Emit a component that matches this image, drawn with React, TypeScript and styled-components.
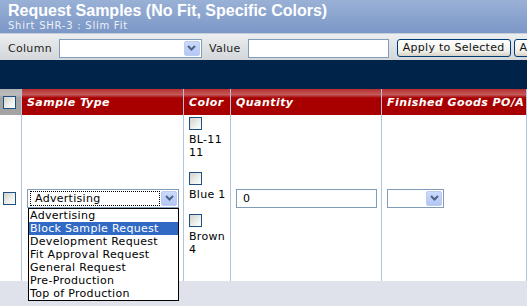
import React from 'react';
import styled, { createGlobalStyle } from 'styled-components';

const GlobalStyle = createGlobalStyle`
  html, body {
    margin: 0;
    padding: 0;
    background: #dfe2ea;
  }
  body {
    font-family: "DejaVu Sans", Verdana, sans-serif;
    font-size: 11px;
    letter-spacing: 0.3px;
    color: #000;
    overflow: hidden;
  }
`;

const Page = styled.div`
  width: 527px;
  height: 306px;
  overflow: hidden;
  display: flex;
  flex-direction: column;
  background: #dfe2ea;
`;

const TitleBar = styled.div`
  height: 34px;
  box-sizing: border-box;
  padding: 1px 8px 0;
  background: linear-gradient(#9ab1d6, #7b97c7);
  border-bottom: 1px solid #c6ced8;
  color: #fff;
`;

const Title = styled.div`
  font-family: "Liberation Sans", Arial, sans-serif;
  font-weight: bold;
  font-size: 16px;
  line-height: 19px;
  letter-spacing: 0;
  white-space: nowrap;
`;

const Subtitle = styled.div`
  font-size: 10px;
  line-height: 12px;
  color: #eef2f8;
  letter-spacing: 0.75px;
  white-space: nowrap;
`;

const Toolbar = styled.div`
  height: 26px;
  box-sizing: border-box;
  display: flex;
  align-items: center;
  padding: 2px 0 0 8px;
  background: linear-gradient(#eceeef, #d3d7da);
  white-space: nowrap;
  overflow: hidden;
`;

const Label = styled.span`
  color: #222;
  margin-right: 7px;
`;

const Input = styled.div<{ w: number }>`
  width: ${p => p.w}px;
  height: 19px;
  box-sizing: border-box;
  border: 1px solid #7f9db9;
  background: #fff;
  padding: 0 6px;
  line-height: 17px;
  flex-shrink: 0;
`;

const ToolInput = styled(Input)`
  margin-right: 8px;
`;

const SelectBox = styled.div<{ w: number }>`
  position: relative;
  width: ${p => p.w}px;
  height: 19px;
  box-sizing: border-box;
  border: 1px solid #7f9db9;
  background: #fff;
  display: flex;
  align-items: center;
  padding: 0 1px 0 2px;
  flex-shrink: 0;
`;

const ToolSelect = styled(SelectBox)`
  margin-right: 7px;
`;

const SelectValue = styled.div<{ focused?: boolean }>`
  flex: 1;
  height: 15px;
  box-sizing: border-box;
  line-height: 13px;
  padding-left: 4px;
  border: 1px ${p => (p.focused ? 'dotted #000' : 'solid transparent')};
  margin-right: 1px;
  white-space: nowrap;
  overflow: hidden;
`;

const DropButton = styled.div`
  width: 16px;
  height: 15px;
  box-sizing: border-box;
  border: 1px solid #bccbee;
  border-radius: 2px;
  background: linear-gradient(#cbdafc, #b3c7f5);
  display: flex;
  align-items: center;
  justify-content: center;
`;

const Button = styled.div<{ gap?: number }>`
  height: 18px;
  box-sizing: border-box;
  border: 1px solid #003c74;
  border-radius: 3px;
  background: linear-gradient(#ffffff, #f0f0ea 70%, #d6d0c5);
  padding: 0 5px;
  margin-right: ${p => p.gap ?? 0}px;
  line-height: 16px;
  color: #111;
  flex-shrink: 0;
`;

const Band = styled.div`
  height: 29px;
  background: #00234a;
`;

const Grid = styled.div`
  display: grid;
  grid-template-columns: 22px 162px 47px 151px 145px;
  grid-template-rows: 26px 166px;
`;

const HeadCell = styled.div<{ muted?: boolean }>`
  box-sizing: border-box;
  border-right: 1px solid #b4c3dc;
  background: ${p =>
    p.muted
      ? 'linear-gradient(#b2b2b2 0, #bdbdbd 22%, #a3a3a3 34%, #a3a3a3 100%)'
      : 'linear-gradient(#b52f2f 0, #c45a5a 22%, #a80000 34%, #a80000 100%)'};
  color: #fff;
  font-weight: bold;
  font-style: italic;
  letter-spacing: 0.45px;
  display: flex;
  align-items: center;
  padding-left: ${p => (p.muted ? 3 : 5)}px;
  white-space: nowrap;
  overflow: hidden;
`;

const Cell = styled.div<{ top?: boolean }>`
  box-sizing: border-box;
  border-right: 1px solid #b4c3dc;
  background: #fff;
  display: flex;
  align-items: ${p => (p.top ? 'flex-start' : 'center')};
  padding-left: 5px;
`;

const CheckCell = styled(Cell)`
  padding-left: 3px;
`;

const ColorCell = styled(Cell)`
  flex-direction: column;
  padding: 2px 3px 0 5px;
`;

const ColorItem = styled.div`
  margin-bottom: 13px;
`;

const ColorName = styled.div`
  margin-top: 3px;
  line-height: 13px;
`;

const Check = styled.span`
  display: block;
  width: 13px;
  height: 13px;
  box-sizing: border-box;
  border: 1px solid #1c5180;
  background: linear-gradient(135deg, #d2d2cb, #f4f4f1 70%, #fdfdfd);
`;

const OptionList = styled.div`
  position: absolute;
  top: 18px;
  left: 0;
  width: 151px;
  box-sizing: border-box;
  border: 1px solid #000;
  background: #fff;
  z-index: 2;
`;

const Option = styled.div<{ active?: boolean }>`
  height: 13px;
  line-height: 13px;
  padding-left: 1px;
  white-space: nowrap;
  background: ${p => (p.active ? '#316ac5' : '#fff')};
  color: ${p => (p.active ? '#fff' : '#000')};
`;

const Chevron = () => (
  <svg width="9" height="6" viewBox="0 0 9 6">
    <path d="M1 1 L4.5 4.5 L8 1" fill="none" stroke="#4d6185" strokeWidth="2" />
  </svg>
);

const sampleTypes = [
  'Advertising',
  'Block Sample Request',
  'Development Request',
  'Fit Approval Request',
  'General Request',
  'Pre-Production',
  'Top of Production',
];

const colors = ['BL-11 11', 'Blue 1', 'Brown 4'];

export default function App() {
  return (
    <Page>
      <GlobalStyle />
      <TitleBar>
        <Title>Request Samples (No Fit, Specific Colors)</Title>
        <Subtitle>Shirt SHR-3 : Slim Fit</Subtitle>
      </TitleBar>
      <Toolbar>
        <Label>Column</Label>
        <ToolSelect w={143}>
          <SelectValue />
          <DropButton>
            <Chevron />
          </DropButton>
        </ToolSelect>
        <Label>Value</Label>
        <ToolInput w={141} />
        <Button gap={3}>Apply to Selected</Button>
        <Button>Apply to All</Button>
      </Toolbar>
      <Band />
      <Grid>
        <HeadCell muted>
          <Check />
        </HeadCell>
        <HeadCell>Sample Type</HeadCell>
        <HeadCell>Color</HeadCell>
        <HeadCell>Quantity</HeadCell>
        <HeadCell>Finished Goods PO/A</HeadCell>

        <CheckCell>
          <Check />
        </CheckCell>
        <Cell>
          <SelectBox w={152}>
            <SelectValue focused>Advertising</SelectValue>
            <DropButton>
              <Chevron />
            </DropButton>
            <OptionList>
              {sampleTypes.map((t, i) => (
                <Option key={t} active={i === 1}>
                  {t}
                </Option>
              ))}
            </OptionList>
          </SelectBox>
        </Cell>
        <ColorCell top>
          {colors.map(c => (
            <ColorItem key={c}>
              <Check />
              <ColorName>{c}</ColorName>
            </ColorItem>
          ))}
        </ColorCell>
        <Cell>
          <Input w={141}>0</Input>
        </Cell>
        <Cell>
          <SelectBox w={57}>
            <SelectValue />
            <DropButton>
              <Chevron />
            </DropButton>
          </SelectBox>
        </Cell>
      </Grid>
    </Page>
  );
}
